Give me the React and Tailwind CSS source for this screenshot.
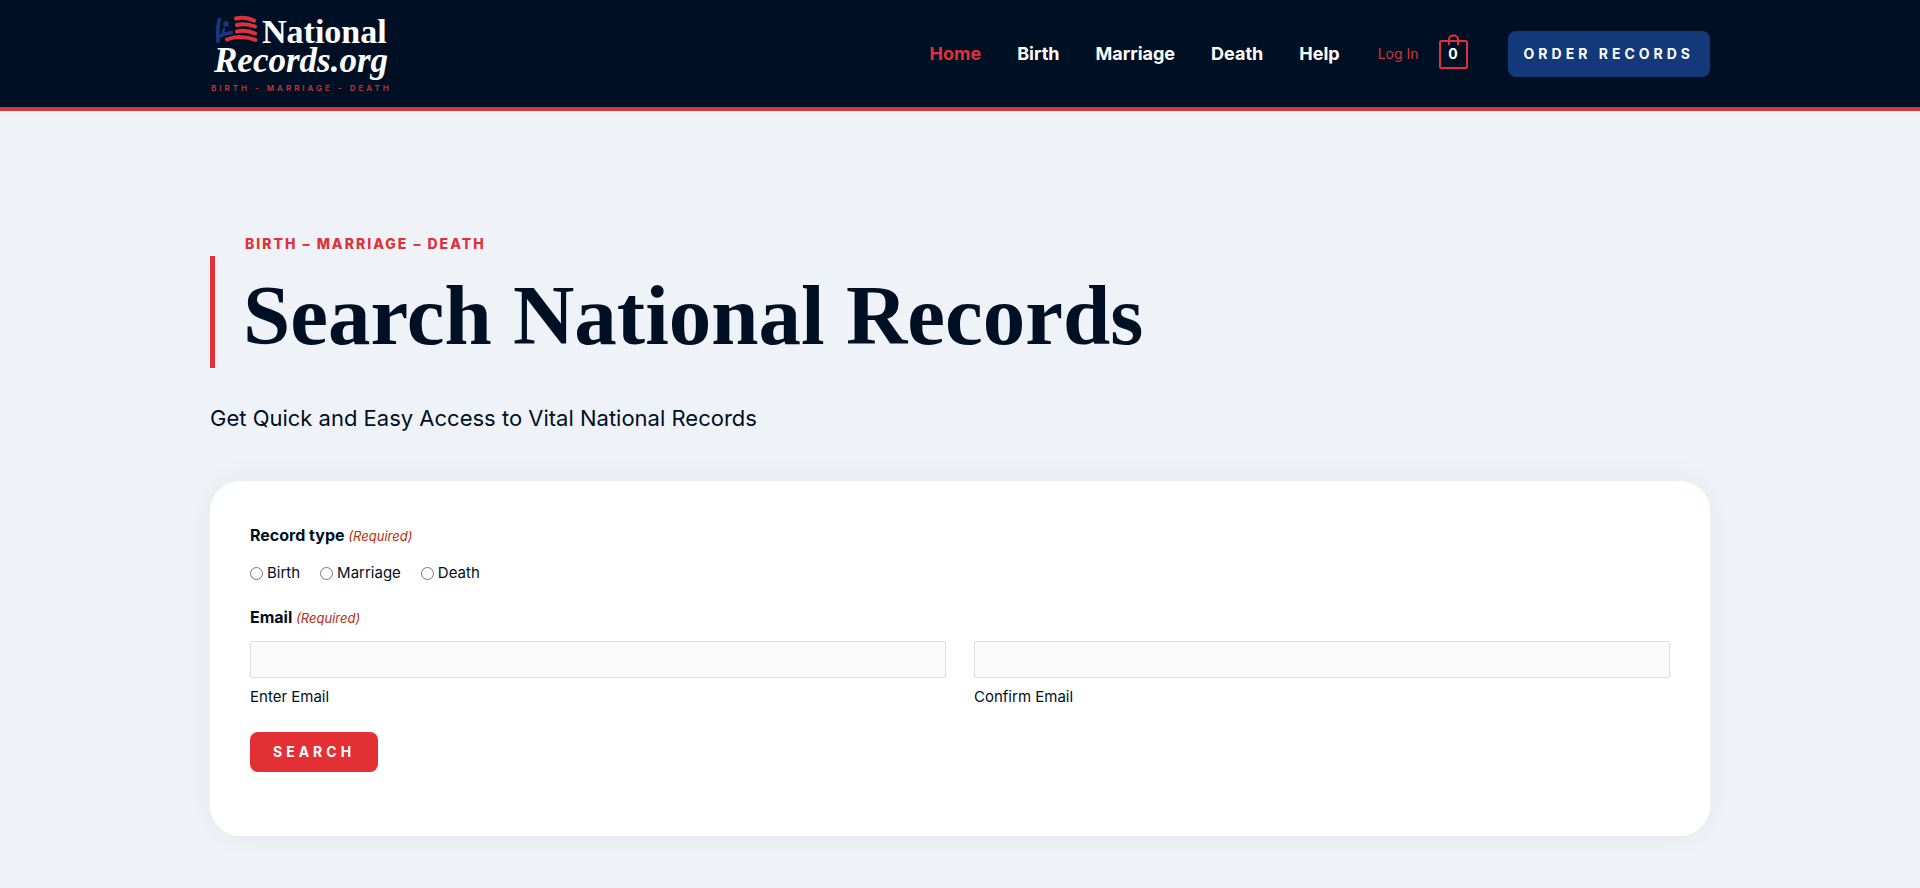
import { useState } from "react";

const navItems = [
  { label: "Home", active: true },
  { label: "Birth" },
  { label: "Marriage" },
  { label: "Death" },
  { label: "Help" },
];

const recordTypes = ["Birth", "Marriage", "Death"];

function Logo() {
  return (
    <a href="#" aria-label="National Records.org">
      <svg width="184" height="84" viewBox="0 0 184 84" fill="none">
        {/* Flag mark */}
        <g stroke="#17397f" strokeWidth="3.5" strokeLinecap="round" strokeLinejoin="round">
          <path d="M9.500 7.500C7.500 13 7.500 22 8 29.500" />
          <path d="M8.500 25C12 22.500 16 21.500 21.500 20.500" />
          <path d="M14 17L12.500 22" strokeWidth="2.500" />
        </g>
        <circle cx="16" cy="12" r="2.800" fill="#17397f" />
        <g stroke="#e03038" strokeWidth="4" strokeLinecap="round">
          <path d="M26 6.500C32 5 38 5.500 44 8.500" />
          <path d="M27 13C33 11.500 39 12 45 14.500" />
          <path d="M27 19.500C33 18 39 18.500 45 21.500" />
          <path d="M17 27.500C25 24 37 24.500 45.500 28" />
        </g>
        <g fill="#ffffff" fontFamily="'Liberation Serif', serif">
          <text x="52" y="31" fontSize="34" fontWeight="700">National</text>
          <text x="4" y="60" fontSize="35" fontStyle="italic" fontWeight="700">Records.org</text>
        </g>
        <text x="1" y="79" fill="#c9303c" fontFamily="Inter, sans-serif" fontSize="8" fontWeight="600" letterSpacing="3">
          BIRTH - MARRIAGE - DEATH
        </text>
      </svg>
    </a>
  );
}

function Cart() {
  return (
    <a href="#" aria-label="View cart" className="relative block">
      <svg width="29" height="35" viewBox="0 0 29 35" fill="none" stroke="#e13138" strokeWidth="2">
        <rect x="1" y="7" width="27" height="27" rx="1.500" />
        <path d="M10 11V5.500a4 4 0 0 1 4-4h1a4 4 0 0 1 4 4V11" />
      </svg>
      <span className="absolute inset-x-0 top-[10px] text-center text-sm leading-5 font-bold text-white">0</span>
    </a>
  );
}

function Header() {
  return (
    <header className="border-b-4 border-[#d63840] bg-[#001024]">
      <div className="mx-auto flex h-[107px] max-w-[1500px] items-center justify-between">
        <Logo />
        <div className="flex items-center">
          <nav className="flex gap-9 text-lg font-bold">
            {navItems.map((item) => (
              <a key={item.label} href="#" className={item.active ? "text-[#e13138]" : "text-white"}>
                {item.label}
              </a>
            ))}
          </nav>
          <a href="#" className="ml-[38px] text-sm text-[#d5323a]">Log In</a>
          <div className="mb-1 ml-5">
            <Cart />
          </div>
          <a
            href="#"
            className="ml-10 rounded-lg bg-[#13397b] px-4 py-3 text-sm leading-[22px] font-bold tracking-[4px] text-white"
          >
            ORDER RECORDS
          </a>
        </div>
      </div>
    </header>
  );
}

function Required() {
  return <span className="text-[13px] font-normal text-[#c02b0a] italic">(Required)</span>;
}

function EmailField({ id, label }) {
  return (
    <div className="flex flex-1 flex-col-reverse gap-[7px]">
      <label htmlFor={id} className="text-[15px] leading-6">{label}</label>
      <input
        id={id}
        type="email"
        className="h-[37px] w-full rounded-xs border border-[#dddddd] bg-[#fafafa] px-3 text-[15px]"
      />
    </div>
  );
}

function SearchForm() {
  const [recordType, setRecordType] = useState("");

  return (
    <form
      onSubmit={(e) => e.preventDefault()}
      className="mt-[49px] rounded-[30px] bg-white px-10 pt-10 pb-16 shadow-[0_0_30px_rgba(0,16,36,0.05)]"
    >
      <fieldset>
        <legend className="leading-7 font-bold">
          Record type <Required />
        </legend>
        <div className="mt-[11px] flex gap-5 text-[15px] leading-6">
          {recordTypes.map((type) => (
            <label key={type} className="flex items-center gap-1">
              <input
                type="radio"
                name="recordType"
                value={type}
                checked={recordType === type}
                onChange={(e) => setRecordType(e.target.value)}
                className="size-[13px]"
              />
              {type}
            </label>
          ))}
        </div>
      </fieldset>

      <fieldset className="mt-[18px]">
        <legend className="leading-7 font-bold">
          Email <Required />
        </legend>
        <div className="mt-[9px] flex gap-7">
          <EmailField id="email" label="Enter Email" />
          <EmailField id="confirm-email" label="Confirm Email" />
        </div>
      </fieldset>

      <button
        type="submit"
        className="mt-[23px] h-10 rounded-lg bg-[#e33035] px-[23px] text-sm font-bold tracking-[4px] text-white"
      >
        SEARCH
      </button>
    </form>
  );
}

export default function App() {
  return (
    <div className="min-h-screen bg-[#eff3f8] font-[Inter,sans-serif] text-[#001024]">
      <Header />
      <main className="mx-auto max-w-[1500px] pt-[121px] pb-[52px]">
        <p className="pl-[35px] text-sm leading-6 font-extrabold tracking-[2px] text-[#e13138]">
          BIRTH – MARRIAGE – DEATH
        </p>
        <h1 className="border-l-5 border-[#e13138] pt-1.5 pl-7 font-['Liberation_Serif',serif] text-[85px] leading-[106px] font-bold">
          Search National Records
        </h1>
        <p className="mt-9 text-[22px] leading-7">Get Quick and Easy Access to Vital National Records</p>
        <SearchForm />
      </main>
    </div>
  );
}
